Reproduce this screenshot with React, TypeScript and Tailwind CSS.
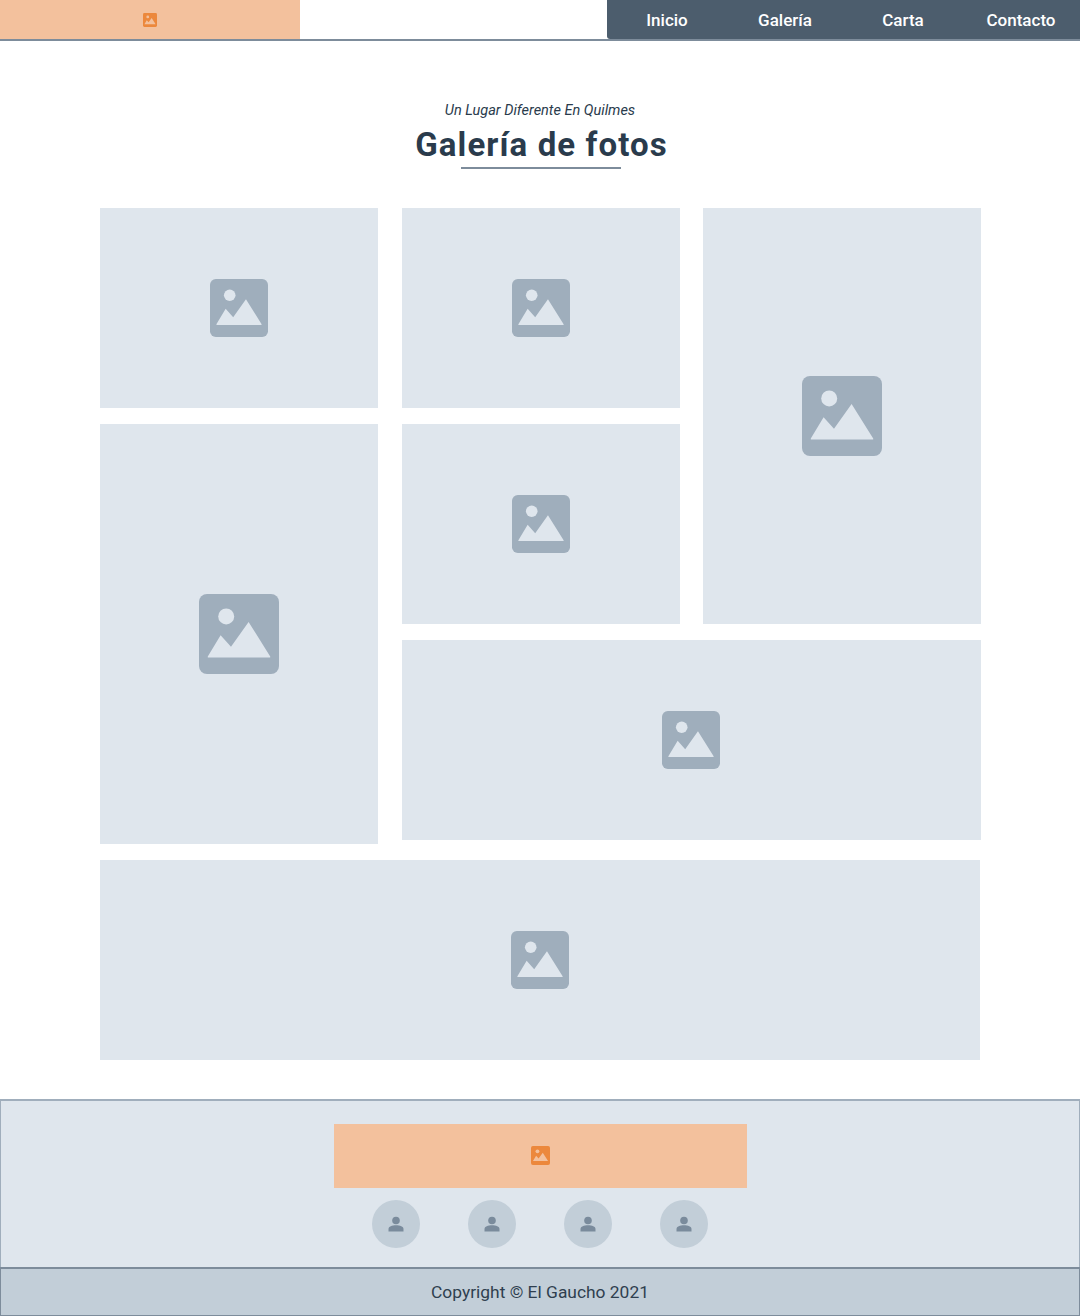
import React from "react";

function ImageIcon({ size, bg, fg }: { size: string; bg: string; fg: string }) {
  return (
    <svg viewBox="0 0 100 100" className={size} aria-hidden="true">
      <rect x="0" y="0" width="100" height="100" rx="10" fill={bg} />
      <circle cx="34" cy="28" r="10" fill={fg} />
      <path
        d="M11 78 L27 51.500 L40 66 L62 35 L89 78 Q89.500 79.500 88 79.500 L12 79.500 Q10.500 79.500 11 78 Z"
        fill={fg}
      />
    </svg>
  );
}

function Tile({ className, large }: { className: string; large?: boolean }) {
  return (
    <div className={`flex items-center justify-center bg-[#dfe6ed] ${className}`}>
      <ImageIcon size={large ? "w-[80px] h-[80px]" : "w-[58px] h-[58px]"} bg="#9faebc" fg="#dfe6ed" />
    </div>
  );
}

function Person() {
  return (
    <div className="flex h-12 w-12 items-center justify-center rounded-full bg-[#c2ced8]">
      <svg viewBox="0 0 16 16" className="h-4 w-4" aria-hidden="true">
        <circle cx="8" cy="4.500" r="3.800" fill="#7a8b9c" />
        <path d="M0.500 15.500 V13 C0.500 10.500 4 9.300 8 9.300 C12 9.300 15.500 10.500 15.500 13 V15.500 Z" fill="#7a8b9c" />
      </svg>
    </div>
  );
}

export default function App() {
  const font = { fontFamily: "Roboto, 'Liberation Sans', sans-serif" };
  return (
    <div style={font} className="min-h-[1316px] bg-white text-[#2a3b4c]">
      <header className="flex h-[41px] items-start justify-between border-b-2 border-[#7d8c9b]">
        <div className="flex h-[39px] w-[300px] items-center justify-center bg-[#f3c19d]">
          <ImageIcon size="w-[14px] h-[14px]" bg="#ec883c" fg="#f3c19d" />
        </div>
        <nav className="flex h-[39px] w-[473px] rounded-bl-[3px] bg-[#4c5d6d] pl-px pt-[2px] text-[17px] font-medium text-white">
          {["Inicio", "Galería", "Carta", "Contacto"].map((t) => (
            <a key={t} className="flex w-[118px] items-center justify-center">
              {t}
            </a>
          ))}
        </nav>
      </header>

      <section className="flex flex-col items-center pt-[60px]">
        <p className="text-[14.500px] italic leading-5 text-[#2a3b4c]">Un Lugar Diferente En Quilmes</p>
        <h1 className="ml-[3px] mt-1 text-[33px] font-bold leading-[40px] tracking-[1.1px] text-[#2a3b4c]">Galería de fotos</h1>
        <div className="ml-px mt-[2px] h-[2px] w-40 bg-[#7d8c9b]" />
      </section>

      <main className="mx-[100px] mt-[39px] grid w-[881px] grid-cols-[278px_278px_278px] grid-rows-[200px_200px_204px] gap-x-[23.5px] gap-y-4">
        <Tile className="" />
        <Tile className="" />
        <Tile className="row-span-2 h-[416px]" large />
        <Tile className="row-span-2 h-[420px]" large />
        <Tile className="" />
        <Tile className="col-span-2 h-[200px]" />
      </main>
      <div className="mx-[100px] mt-4">
        <Tile className="h-[200px] w-[880px]" />
      </div>

      <footer className="mt-[39px]">
        <div className="flex h-[168px] flex-col items-center border-x border-t-2 border-[#a0aebc] bg-[#dfe6ed] pt-[23px]">
          <div className="flex h-16 w-[413px] items-center justify-center bg-[#f3c19d] pb-px">
            <ImageIcon size="w-[19px] h-[19px]" bg="#ec883c" fg="#f3c19d" />
          </div>
          <div className="mt-3 flex gap-12">
            <Person />
            <Person />
            <Person />
            <Person />
          </div>
        </div>
        <div className="flex h-[49px] items-center justify-center border-x border-t-2 border-b border-[#7d8c9b] bg-[#c2ced8] text-[17.400px] text-[#2f3f4f]">
          Copyright © El Gaucho 2021
        </div>
      </footer>
    </div>
  );
}
